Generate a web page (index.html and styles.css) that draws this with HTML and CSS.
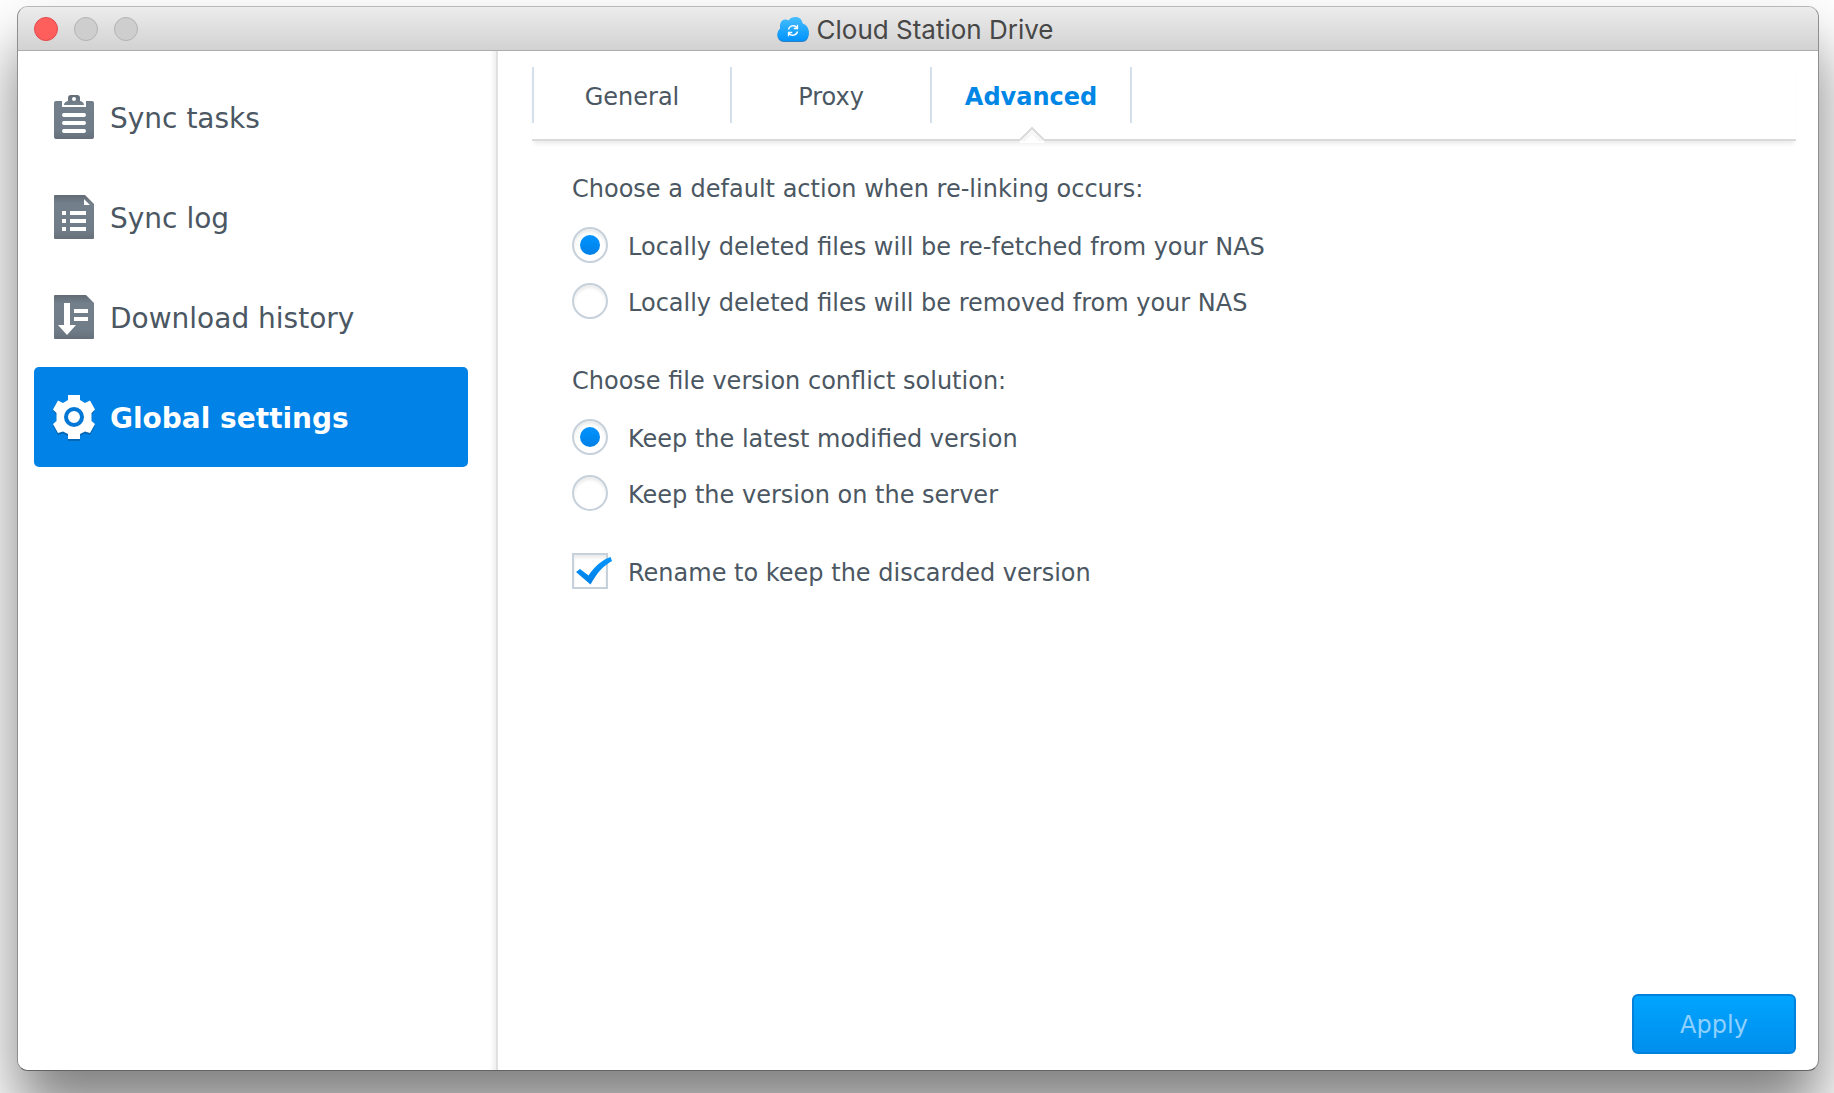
FILE: index.html
```html
<!DOCTYPE html>
<html lang="en">
<head>
<meta charset="utf-8">
<meta name="viewport" content="width=device-width, initial-scale=1">
<title>Cloud Station Drive</title>
<link rel="stylesheet" href="styles.css">
</head>
<body>
<div class="window">
  <header class="titlebar">
    <div class="lights">
      <button class="light light-close" type="button" aria-label="Close"></button>
      <button class="light" type="button" aria-label="Minimize" disabled></button>
      <button class="light" type="button" aria-label="Zoom" disabled></button>
    </div>
    <h1 class="title">
      <svg class="title-icon" viewBox="0 0 32 25" aria-hidden="true">
        <defs>
          <linearGradient id="cloud" x1="0" y1="0" x2="0" y2="1">
            <stop offset="0" stop-color="#45bdfb"/>
            <stop offset="1" stop-color="#0093ff"/>
          </linearGradient>
        </defs>
        <path d="M7 25C3 25 0.500 22 0.500 18.500C0.500 16 1.500 13.500 3.500 12.300C2.500 7 4.500 3.500 8 3.500C9.500 3.500 10.500 3.800 11.500 4.500C13 2 15.500 1 18.500 1C22.500 1 25 3.500 25.500 7.500C29.500 8.500 31.700 12 31.700 16.500C31.700 21.500 29 25 25 25Z" fill="#2b7fc0"/>
        <path d="M7 24C3 24 0.500 21 0.500 17.500C0.500 15 1.500 12.500 3.500 11.300C2.500 6 4.500 2.500 8 2.500C9.500 2.500 10.500 2.800 11.500 3.500C13 1 15.500 0 18.500 0C22.500 0 25 2.500 25.500 6.500C29.500 7.500 31.700 11 31.700 15.500C31.700 20.500 29 24 25 24Z" fill="url(#cloud)"/>
        <g fill="none" stroke="#fff" stroke-width="1.300">
          <path d="M11.500 12.500C12.300 8.500 17.500 7.500 20 10.500M20.500 7.800V11.500H16.800"/>
          <path d="M20.500 14.500C19.700 18.500 14.500 19.500 12 16.500M11.500 19.200V15.500H15.200"/>
        </g>
      </svg>
      <span>Cloud Station Drive</span>
    </h1>
  </header>

  <div class="content">
    <nav class="sidebar" aria-label="Sections">
      <svg class="defs" width="0" height="0" aria-hidden="true">
        <defs>
          <linearGradient id="slate" x1="0" y1="0" x2="0" y2="1">
            <stop offset="0" stop-color="#626b76"/>
            <stop offset="0.200" stop-color="#73808b"/>
            <stop offset="0.800" stop-color="#707c87"/>
            <stop offset="1" stop-color="#66707b"/>
          </linearGradient>
        </defs>
      </svg>
      <a class="nav-item" href="#tasks">
        <svg class="nav-icon" viewBox="0 0 44 44" aria-hidden="true">
          <path fill="url(#slate)" fill-rule="evenodd" d="M4 6H10V12H34V6H40Q42 6 42 8V42Q42 44 40 44H4Q2 44 2 42V8Q2 6 4 6ZM12 10C12 8 13.500 6.500 16 6V3Q16 0 19 0H25Q28 0 28 3V6C30.500 6.500 32 8 32 10ZM22 2A2 2 0 0 0 22 6A2 2 0 0 0 22 2Z"/>
          <path fill="none" stroke="#fff" stroke-width="4" stroke-linecap="round" d="M12 20H32M12 28H32M12 36H32"/>
        </svg>
        <span class="label">Sync tasks</span>
      </a>
      <a class="nav-item" href="#log">
        <svg class="nav-icon" viewBox="0 0 44 44" aria-hidden="true">
          <path fill="url(#slate)" d="M3 0H33L42 9V43Q42 44 41 44H3Q2 44 2 43V1Q2 0 3 0Z"/>
          <path fill="#fff" d="M32 4V10H38ZM10 16H14V20H10ZM18 16H34V20H18ZM10 24H14V28H10ZM18 24H34V28H18ZM10 32H14V36H10ZM18 32H34V36H18Z"/>
        </svg>
        <span class="label">Sync log</span>
      </a>
      <a class="nav-item" href="#history">
        <svg class="nav-icon" viewBox="0 0 44 44" aria-hidden="true">
          <path fill="url(#slate)" d="M3 0H34L42 8V43Q42 44 41 44H3Q2 44 2 43V1Q2 0 3 0Z"/>
          <path fill="#fff" d="M12 8H18V30H24L15 40L6 30H12ZM22 14H36V18H22ZM22 22H36V26H22Z"/>
        </svg>
        <span class="label">Download history</span>
      </a>
      <a class="nav-item nav-item-active" href="#settings" aria-current="page">
        <svg class="nav-icon" viewBox="0 0 44 44" aria-hidden="true">
          <path fill="#0467b4" transform="translate(0 2)" d="M16 0H28V5L33 7.500L38 5.500L42.500 14L39.500 18V26L43 29L38 38L33 36.500L28 39V44H16V39L11 36.500L6 38L1 29L4.500 26V18L1.500 14L6 5.500L11 7.500L16 5Z"/>
          <path fill="#fff" d="M16 0H28V5L33 8L38 5.500L43 14.500L39.500 18V26L43 29L38 38L33 36.500L28 39V44H16V39L11 36.500L6 38L1 29L4.500 26V18L1 14.500L6 5.500L11 8L16 5Z"/>
          <circle cx="22" cy="22" r="8" fill="#fff" stroke="#0077d4" stroke-width="4"/>
        </svg>
        <span class="label">Global settings</span>
      </a>
    </nav>

    <main class="panel">
      <div class="tabs" role="tablist">
        <button class="tab" type="button" role="tab" aria-selected="false">General</button>
        <button class="tab" type="button" role="tab" aria-selected="false">Proxy</button>
        <button class="tab tab-active" type="button" role="tab" aria-selected="true">Advanced
          <svg class="tab-pointer" viewBox="0 0 28 16" aria-hidden="true">
            <path d="M2 13L14 1L26 13V16H2Z" fill="#fff"/>
            <path d="M5 14L14 5L23 14" fill="none" stroke="#f6f6f6" stroke-width="3"/>
            <path d="M2 13L14 1L26 13" fill="none" stroke="#d8dada" stroke-width="2"/>
          </svg>
        </button>
      </div>

      <form class="form">
        <fieldset class="group">
          <legend class="legend">Choose a default action when re-linking occurs:</legend>
          <label class="option"><input class="radio" type="radio" name="relink" checked><span class="label">Locally deleted files will be re-fetched from your NAS</span></label>
          <label class="option"><input class="radio" type="radio" name="relink"><span class="label">Locally deleted files will be removed from your NAS</span></label>
        </fieldset>
        <fieldset class="group">
          <legend class="legend">Choose file version conflict solution:</legend>
          <label class="option"><input class="radio" type="radio" name="conflict" checked><span class="label">Keep the latest modified version</span></label>
          <label class="option"><input class="radio" type="radio" name="conflict"><span class="label">Keep the version on the server</span></label>
        </fieldset>
        <label class="option">
          <span class="checkbox">
            <input class="checkbox-input" type="checkbox" checked>
            <svg class="checkmark" viewBox="0 0 42 36" aria-hidden="true">
              <defs>
                <linearGradient id="tick" x1="0" y1="0" x2="0" y2="1">
                  <stop offset="0" stop-color="#0095ff"/>
                  <stop offset="1" stop-color="#0080e6"/>
                </linearGradient>
              </defs>
              <path fill="url(#tick)" d="M4 19L8 16L16.500 22.500C23 13 30 7 38.500 4L40 8C31 13 25 20 18.500 31.500Z"/>
            </svg>
          </span>
          <span class="label">Rename to keep the discarded version</span>
        </label>
        <div class="actions">
          <button class="apply" type="submit" disabled>Apply</button>
        </div>
      </form>
    </main>
  </div>
</div>
</body>
</html>
```
FILE: styles.css
```css
* {
  box-sizing: border-box;
}

body {
  margin: 0;
  min-height: 100vh;
  display: flex;
  padding: 6px 15px 22px 17px;
  overflow: hidden;
  background: #fff;
  color: #4b5762;
  font-family: Verdana, "DejaVu Sans", sans-serif;
  font-size: 24px;
  line-height: 36px;
}

button {
  font: inherit;
}

.window {
  flex: 1;
  display: flex;
  flex-direction: column;
  border: 1px solid;
  border-color: #b8b8b8 #8e8e8e #636363;
  border-radius: 11px;
  background: #fff;
  box-shadow: 0 40px 60px rgba(0, 0, 0, 0.5);
}

/* Title bar */

.titlebar {
  display: grid;
  grid-template-columns: 1fr auto 1fr;
  align-items: center;
  height: 44px;
  padding: 0 16px;
  border-bottom: 1px solid #acacac;
  border-radius: 10px 10px 0 0;
  background: linear-gradient(#ececec, #d2d2d2);
}

.lights {
  display: flex;
  gap: 16px;
}

.light {
  width: 24px;
  height: 24px;
  padding: 0;
  border: 1px solid #b3b3b3;
  border-radius: 50%;
  background: #cecece;
}

.light-close {
  border-color: #e2474a;
  background: #ff5f5c;
}

.title {
  display: flex;
  align-items: center;
  gap: 8px;
  margin: 0;
  padding: 2px 6px 0 0;
  color: #474747;
  font-family: Inter, sans-serif;
  font-size: 26px;
  font-weight: 400;
}

.title-icon {
  width: 32px;
  height: 25px;
}

/* Layout */

.content {
  flex: 1;
  display: flex;
}

/* Text beside an icon or control, set slightly below the optical centre */
.label {
  padding-top: 4px;
  line-height: 32px;
}

/* Sidebar */

.sidebar {
  width: 480px;
  flex: none;
  padding: 16px 28px 16px 16px;
  border-right: 2px solid #e0e0e0;
  border-bottom-left-radius: 10px;
  background: linear-gradient(to left, #efefef, #fff 6px);
}

.defs {
  position: absolute;
}

.nav-item {
  display: flex;
  align-items: center;
  gap: 14px;
  height: 100px;
  padding: 0 18px;
  border-radius: 5px;
  color: inherit;
  font-size: 28px;
  text-decoration: none;
}

.nav-item-active {
  background: #0082e6;
  color: #fff;
  font-weight: 700;
}

.nav-icon {
  width: 44px;
  height: 44px;
  overflow: visible;
}

/* Settings panel */

.panel {
  flex: 1;
  display: flex;
  flex-direction: column;
  padding: 16px 22px 16px 34px;
}

.tabs {
  display: flex;
  padding-bottom: 16px;
  border-bottom: 2px solid #d8dada;
  box-shadow: 0 5px 4px -2px rgba(0, 0, 0, 0.08);
}

.tab {
  position: relative;
  width: 200px;
  height: 56px;
  padding: 4px 0 0;
  border: 0;
  border-right: 2px solid #d3dfea;
  background: none;
  color: inherit;
}

.tab:first-child {
  border-left: 2px solid #d3dfea;
}

.tab-active {
  color: #0086e5;
  font-weight: 700;
}

.tab-pointer {
  position: absolute;
  top: 60px;
  left: calc(50% - 13px);
  width: 28px;
  height: 16px;
}

.form {
  flex: 1;
  display: flex;
  flex-direction: column;
  padding: 30px 0 0 40px;
}

.group {
  display: flex;
  flex-direction: column;
  gap: 20px;
  margin: 0 0 44px;
  padding: 0;
  border: 0;
}

.group:last-of-type {
  margin-bottom: 42px;
}

.legend {
  margin-bottom: 20px;
  padding: 0;
}

.option {
  display: flex;
  align-items: center;
  gap: 20px;
}

.radio {
  appearance: none;
  width: 36px;
  height: 36px;
  margin: 0;
  border: 2px solid #c6d1dc;
  border-radius: 50%;
  box-shadow: inset 0 3px 3px rgba(0, 0, 0, 0.08);
  display: grid;
  place-items: center;
}

.radio:checked::before {
  content: "";
  width: 20px;
  height: 20px;
  border-radius: 50%;
  background: linear-gradient(#0093ff, #0080e6);
}

.checkbox {
  position: relative;
  height: 36px;
}

.checkbox-input {
  appearance: none;
  display: block;
  width: 36px;
  height: 36px;
  margin: 0;
  border: 2px solid #c6d1dc;
  box-shadow: inset 0 3px 3px rgba(0, 0, 0, 0.08);
}

.checkmark {
  position: absolute;
  top: 0;
  left: 0;
  width: 42px;
  height: 36px;
  visibility: hidden;
  pointer-events: none;
}

.checkbox-input:checked + .checkmark {
  visibility: visible;
}

.actions {
  display: flex;
  justify-content: flex-end;
  margin-top: auto;
}

.apply {
  width: 164px;
  height: 60px;
  padding: 2px 0 0;
  border: 2px solid #0082dc;
  border-radius: 6px;
  background: linear-gradient(#00a4ff, #008fec);
  color: #8fd0ff;
}
```
